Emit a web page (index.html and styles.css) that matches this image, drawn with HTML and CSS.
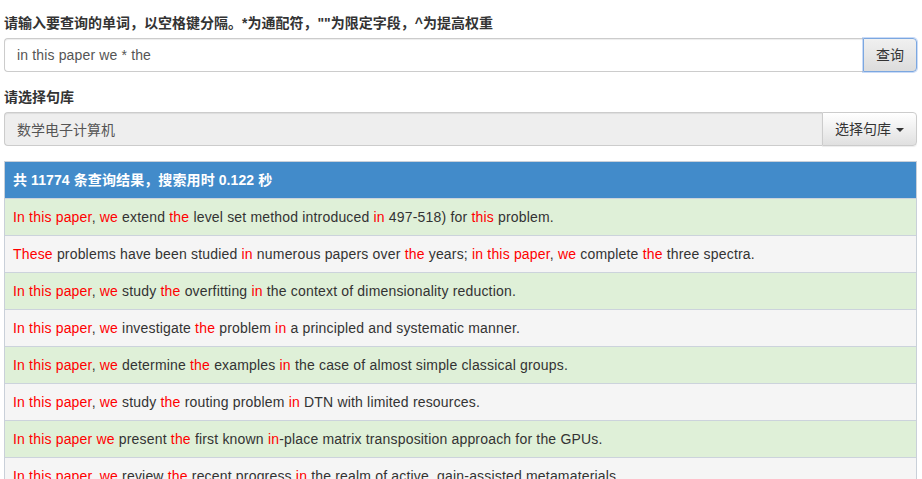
FILE: index.html
```html
<!DOCTYPE html>
<html lang="zh">
<head>
<meta charset="utf-8">
<title>句库查询</title>
<link rel="stylesheet" href="styles.css">
</head>
<body>
<div class="page">
  <div class="form-group">
    <label class="label">请输入要查询的单词，以空格键分隔。*为通配符，""为限定字段，^为提高权重</label>
    <div class="input-group">
      <input class="form-control" type="text" value="in this paper we * the">
      <button class="btn btn-focus" type="button">查询</button>
    </div>
  </div>
  <div class="form-group">
    <label class="label">请选择句库</label>
    <div class="input-group">
      <input class="form-control readonly" type="text" value="数学电子计算机" readonly>
      <button class="btn" type="button">选择句库 <span class="caret"></span></button>
    </div>
  </div>
  <div class="panel">
    <div class="panel-head">共 11774 条查询结果，搜索用时 0.122 秒</div>
    <div class="row success"><span class="hl">In this paper</span>, <span class="hl">we</span> extend <span class="hl">the</span> level set method introduced <span class="hl">in</span> 497-518) for <span class="hl">this</span> problem.</div>
    <div class="row active"><span class="hl">These</span> problems have been studied <span class="hl">in</span> numerous papers over <span class="hl">the</span> years; <span class="hl">in this paper</span>, <span class="hl">we</span> complete <span class="hl">the</span> three spectra.</div>
    <div class="row success"><span class="hl">In this paper</span>, <span class="hl">we</span> study <span class="hl">the</span> overfitting <span class="hl">in</span> the context of dimensionality reduction.</div>
    <div class="row active"><span class="hl">In this paper</span>, <span class="hl">we</span> investigate <span class="hl">the</span> problem <span class="hl">in</span> a principled and systematic manner.</div>
    <div class="row success"><span class="hl">In this paper</span>, <span class="hl">we</span> determine <span class="hl">the</span> examples <span class="hl">in</span> the case of almost simple classical groups.</div>
    <div class="row active"><span class="hl">In this paper</span>, <span class="hl">we</span> study <span class="hl">the</span> routing problem <span class="hl">in</span> DTN with limited resources.</div>
    <div class="row success"><span class="hl">In this paper we</span> present <span class="hl">the</span> first known <span class="hl">in</span>-place matrix transposition approach for the GPUs.</div>
    <div class="row active"><span class="hl">In this paper</span>, <span class="hl">we</span> review <span class="hl">the</span> recent progress <span class="hl">in</span> the realm of active, gain-assisted metamaterials.</div>
  </div>
</div>
</body>
</html>
```

FILE: styles.css
```css
* { box-sizing: border-box; }
html, body { margin: 0; padding: 0; background: #fff; }
body {
  font-family: "Liberation Sans", Arial, "Noto Sans CJK SC", sans-serif;
  font-size: 14px;
  line-height: 20px;
  color: #333;
  overflow: hidden;
}
.page {
  padding: 13px 5px 0 4px;
}
.form-group {
  margin-bottom: 15px;
}
.label {
  display: block;
  font-weight: bold;
  margin-bottom: 5px;
  color: #333;
}
.input-group {
  display: flex;
  height: 34px;
}
.form-control {
  flex: 1;
  min-width: 0;
  height: 34px;
  padding: 6px 12px;
  font: inherit;
  font-size: 14px;
  letter-spacing: 0.15px;
  color: #555;
  background: #fff;
  border: 1px solid #ccc;
  border-right: 0;
  border-radius: 4px 0 0 4px;
  box-shadow: inset 0 1px 1px rgba(0,0,0,.075);
  outline: none;
}
.form-control.readonly {
  background: #eee;
  letter-spacing: 0;
}
.btn {
  height: 34px;
  padding: 6px 12px;
  font: inherit;
  font-size: 14px;
  color: #333;
  border: 1px solid #ccc;
  border-radius: 0 4px 4px 0;
  background: linear-gradient(to bottom, #fff 0, #e0e0e0 100%);
  box-shadow: inset 0 1px 0 rgba(255,255,255,.15), 0 1px 1px rgba(0,0,0,.075);
  white-space: nowrap;
  display: flex;
  align-items: center;
  gap: 3px;
}
.btn-focus {
  border-color: #7ba7e0;
  background: linear-gradient(to bottom, #f0f0f0 0, #dcdcdc 100%);
  box-shadow: 0 0 0 1px rgba(102,153,233,.35);
}
.caret {
  display: inline-block;
  width: 0;
  height: 0;
  border-top: 4px solid #333;
  border-left: 4px solid transparent;
  border-right: 4px solid transparent;
  margin-left: 2px;
  margin-top: 1px;
}
.panel {
  margin-top: 0;
  border: 1px solid #c9d0d9;
  border-bottom: 0;
}
.panel-head {
  background: #428bca;
  color: #fff;
  font-weight: bold;
  padding: 8px 8px;
  line-height: 20px;
  letter-spacing: 0.1px;
}
.row {
  padding: 8px 8px;
  line-height: 20px;
  border-top: 1px solid #ccd3dc;
  white-space: nowrap;
  letter-spacing: 0.18px;
}
.row.success { background: #dff0d8; }
.row.active { background: #f5f5f5; }
.hl { color: #f00; }
```
